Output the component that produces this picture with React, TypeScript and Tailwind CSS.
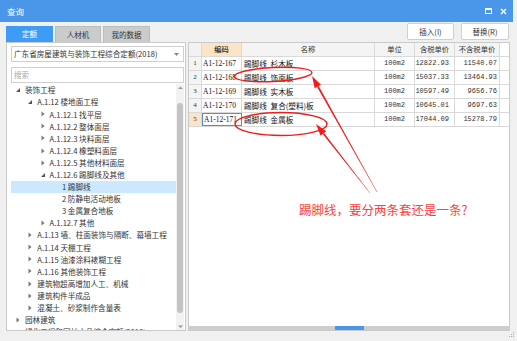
import React from "react";

type Node = { lv: number; t: string; a?: "open" | "closed"; sel?: boolean };

const TREE: Node[] = [
  { lv: 0, t: "装饰工程", a: "open" },
  { lv: 1, t: "A.1.12 楼地面工程", a: "open" },
  { lv: 2, t: "A.1.12.1 找平层", a: "closed" },
  { lv: 2, t: "A.1.12.2 整体面层", a: "closed" },
  { lv: 2, t: "A.1.12.3 块料面层", a: "closed" },
  { lv: 2, t: "A.1.12.4 橡塑料面层", a: "closed" },
  { lv: 2, t: "A.1.12.5 其他材料面层", a: "closed" },
  { lv: 2, t: "A.1.12.6 踢脚线及其他", a: "open" },
  { lv: 3, t: "1 踢脚线", sel: true },
  { lv: 3, t: "2 防静电活动地板" },
  { lv: 3, t: "3 金属复合地板" },
  { lv: 2, t: "A.1.12.7 其他", a: "closed" },
  { lv: 1, t: "A.1.13 墙、柱面装饰与隔断、幕墙工程", a: "closed" },
  { lv: 1, t: "A.1.14 天棚工程", a: "closed" },
  { lv: 1, t: "A.1.15 油漆涂料裱糊工程", a: "closed" },
  { lv: 1, t: "A.1.16 其他装饰工程", a: "closed" },
  { lv: 1, t: "建筑物超高增加人工、机械", a: "closed" },
  { lv: 1, t: "建筑构件半成品", a: "closed" },
  { lv: 1, t: "混凝土、砂浆制作含量表", a: "closed" },
  { lv: 0, t: "园林建筑", a: "closed" },
  { lv: 0, t: "绿化工程和园林小品综合定额(2018)" },
];

const INDENT = ["pl-[4px]", "pl-[16.3px]", "pl-[28.6px]", "pl-[40.9px]"];

const ROWS = [
  ["1", "A1-12-167", "踢脚线\u2002杉木板", "100m2", "12822.93", "11540.07"],
  ["2", "A1-12-168", "踢脚线\u2002饰面板", "100m2", "15037.33", "13464.93"],
  ["3", "A1-12-169", "踢脚线\u2002实木板", "100m2", "10597.49", "9656.76"],
  ["4", "A1-12-170", "踢脚线\u2002复合(塑料)板", "100m2", "10645.01", "9697.63"],
  ["5", "A1-12-171", "踢脚线\u2002金属板", "100m2", "17044.09", "15278.79"],
];

// tapered arrow from tail to tip, computed points
function arrow(tx: number, ty: number, hx: number, hy: number) {
  const dx = hx - tx, dy = hy - ty;
  const len = Math.hypot(dx, dy);
  const ux = dx / len, uy = dy / len;
  const nx = -uy, ny = ux;
  const bx = hx - ux * 12, by = hy - uy * 12;
  const p = (x: number, y: number) => `${x.toFixed(1)},${y.toFixed(1)}`;
  const shaft = [
    p(tx + nx * 0.2, ty + ny * 0.2), p(bx + nx * 0.9, by + ny * 0.9),
    p(bx - nx * 0.9, by - ny * 0.9), p(tx - nx * 0.2, ty - ny * 0.2),
  ].join(" ");
  const head = [p(hx, hy), p(bx + nx * 3.6, by + ny * 3.6), p(bx - nx * 3.6, by - ny * 3.6)].join(" ");
  return { shaft, head };
}

function Arrow({ a }: { a: Node["a"] }) {
  if (a === "open")
    return (
      <svg width="10" height="8" viewBox="0 0 10 8"><polygon points="1,6 5,6 5,2" fill="#555" /></svg>
    );
  if (a === "closed")
    return (
      <svg width="10" height="8" viewBox="0 0 10 8"><polygon points="1.5,1.5 4.5,4 1.5,6.5" fill="#777" /></svg>
    );
  return <span className="w-[10px] shrink-0" />;
}

export default function App() {
  const a1 = arrow(377, 192, 312, 76);
  const a2 = arrow(370, 193, 316, 124);
  return (
    <div className="relative w-[517px] h-[341px] overflow-hidden bg-[#f0f0f0] font-['Noto_Sans_CJK_SC',sans-serif] text-[#333]">
      {/* title bar */}
      <div className="w-[513px] h-[22px] bg-[#4a96e9] flex items-center pl-[7px] pr-[6px]">
        <span className="text-white text-[8.5px]">查询</span>
        <div className="ml-auto flex items-center gap-[8px]">
          <svg width="7" height="6" viewBox="0 0 7 6"><rect x="0.5" y="0.5" width="6" height="5" fill="none" stroke="#fff" /><rect x="0" y="0" width="7" height="2" fill="#fff" /></svg>
          <svg width="7" height="7" viewBox="0 0 7 7"><path d="M1 1 L6 6 M6 1 L1 6" stroke="#fff" strokeWidth="1.4" /></svg>
        </div>
      </div>

      {/* tabs + buttons */}
      <div className="flex h-[20px] pl-[6px] pr-[8px]">
        <div className="flex items-end gap-[2px]">
          <div className="w-[47px] h-[16px] bg-[#3d9df6] text-white text-[7.5px] flex items-center justify-center">定额</div>
          <div className="w-[46px] h-[16px] bg-[#cbcbcb] border border-b-0 border-[#bdbdbd] text-[7.5px] flex items-center justify-center">人材机</div>
          <div className="w-[47px] h-[16px] bg-[#cbcbcb] border border-b-0 border-[#bdbdbd] text-[7.5px] flex items-center justify-center">我的数据</div>
        </div>
        <div className="ml-auto flex gap-[7px] pt-[1px]">
          <button className="w-[47px] h-[17px] bg-white border border-[#cfcfcf] rounded-[2px] text-[7.5px]">插入(I)</button>
          <button className="w-[48px] h-[17px] bg-white border border-[#cfcfcf] rounded-[2px] text-[7.5px]">替换(R)</button>
        </div>
      </div>

      {/* panels */}
      <div className="flex gap-[2px] pl-[6px] pr-[7px] h-[289px]">
        {/* left */}
        <div className="w-[180px] bg-white border border-[#cacaca] flex flex-col">
          <div className="pl-[4px] pr-[1px] pt-[3px]">
            <div className="h-[16px] border border-[#cfcfcf] flex items-center pl-[2px] pr-[4px] text-[7.6px] whitespace-nowrap">
              广东省房屋建筑与装饰工程综合定额(2018)
              <svg className="ml-auto" width="5" height="3" viewBox="0 0 5 3"><polygon points="0,0 5,0 2.5,3" fill="#888" /></svg>
            </div>
            <div className="mt-[5px] h-[16px] border border-[#cfcfcf] flex items-center pl-[2px] text-[7.5px] text-[#aaa]">搜索</div>
          </div>
          <div className="flex flex-1 min-h-0 mt-[1px] pr-[1px]">
            <div className="flex-1 overflow-hidden pl-[4px]">
              {TREE.map((n, i) => (
                <div key={i} className={`h-[12.1px] flex items-center whitespace-nowrap text-[7.6px] ${INDENT[n.lv]} ${n.sel ? "bg-[#cce8ff]" : ""}`}>
                  {n.lv < 3 ? <Arrow a={n.a} /> : <span className="w-[10px] shrink-0" />}
                  <span>{n.t}</span>
                </div>
              ))}
            </div>
            <div className="w-[8px] bg-[#f2f2f2] flex flex-col items-center">
              <svg className="mt-[2px]" width="5" height="4" viewBox="0 0 5 4"><polygon points="0,3 5,3 2.5,0.5" fill="#999" /></svg>
              <div className="mt-[13px] w-[6px] h-[210px] rounded-[3px] bg-[#c3c3c3]" />
              <svg className="mt-auto mb-[1px]" width="5" height="4" viewBox="0 0 5 4"><polygon points="0,0.5 5,0.5 2.5,3" fill="#999" /></svg>
            </div>
          </div>
        </div>

        {/* right */}
        <div className="flex-1 bg-white border border-[#cacaca] flex flex-col">
          <div className="flex h-[14px] border-b border-[#d9d9d9] text-[7.3px]">
            <div className="w-[13px] bg-[#f2f2f2] border-r border-[#d9d9d9]" />
            <div className="w-[40px] bg-[#fde4c6] border-r border-[#d9d9d9] flex items-center justify-center text-[#222] font-medium">编码</div>
            <div className="w-[133px] bg-[#f4f4f4] border-r border-[#d9d9d9] flex items-center justify-center">名称</div>
            <div className="w-[40px] bg-[#f4f4f4] border-r border-[#d9d9d9] flex items-center justify-center">单位</div>
            <div className="w-[40px] bg-[#f4f4f4] border-r border-[#d9d9d9] flex items-center justify-center">含税单价</div>
            <div className="w-[45px] bg-[#f4f4f4] border-r border-[#d9d9d9] flex items-center justify-center">不含税单价</div>
          </div>
          {ROWS.map((r) => {
            const last = r[0] === "5";
            return (
              <div key={r[0]} className="flex h-[14px] border-b border-[#d9d9d9]">
                <div className={`w-[13px] border-r border-[#d9d9d9] flex items-center justify-center text-[7px] font-['Liberation_Serif',serif] ${last ? "bg-[#fde4c6]" : "bg-[#f4f4f4]"}`}>{r[0]}</div>
                <div className={`w-[40px] border-r flex items-center pl-[1px] text-[7.5px] font-['Liberation_Serif',serif] text-[#111] ${last ? "border border-[#4a8fe0]" : "border-[#d9d9d9]"}`}>{r[1]}</div>
                <div className="w-[133px] border-r border-[#d9d9d9] flex items-center pl-[2px] text-[7.6px] text-[#111] whitespace-nowrap">{r[2]}</div>
                <div className="w-[40px] border-r border-[#d9d9d9] flex items-center justify-center text-[7px] font-['Liberation_Mono',monospace]">{r[3]}</div>
                <div className="w-[40px] border-r border-[#d9d9d9] flex items-center justify-end pr-[5px] text-[7px] font-['Liberation_Mono',monospace]">{r[4]}</div>
                <div className="w-[45px] border-r border-[#d9d9d9] flex items-center justify-end pr-[2px] text-[7px] font-['Liberation_Mono',monospace]">{r[5]}</div>
              </div>
            );
          })}
          <div className="mt-auto h-[4px] bg-[#cdcdcd] flex justify-center">
            <div className="w-[29px] h-full bg-[#4a96e9]" />
          </div>
        </div>
      </div>

      {/* resize grip */}
      <svg className="absolute right-[2px] bottom-[3px]" width="6" height="6" viewBox="0 0 6 6">
        <rect x="4" y="0" width="1" height="1" fill="#aaa" />
        <rect x="2" y="2" width="1" height="1" fill="#aaa" /><rect x="4" y="2" width="1" height="1" fill="#aaa" />
        <rect x="0" y="4" width="1" height="1" fill="#aaa" /><rect x="2" y="4" width="1" height="1" fill="#aaa" /><rect x="4" y="4" width="1" height="1" fill="#aaa" />
      </svg>

      {/* annotation overlay */}
      <svg className="absolute inset-0 pointer-events-none" width="517" height="341" viewBox="0 0 517 341">
        <ellipse cx="273" cy="74.5" rx="39" ry="7" fill="none" stroke="#f01c1c" strokeWidth="1.4" transform="rotate(-3 273 74.5)" />
        <ellipse cx="281" cy="124" rx="46" ry="11.5" fill="none" stroke="#f01c1c" strokeWidth="1.4" />
        <polygon points={a1.shaft} fill="#f01c1c" />
        <polygon points={a1.head} fill="#f01c1c" />
        <polygon points={a2.shaft} fill="#f01c1c" />
        <polygon points={a2.head} fill="#f01c1c" />
      </svg>
      <div className="absolute left-[299px] top-[201px] text-[12.5px] leading-[18px] text-[#ff4040] whitespace-nowrap">
        踢脚线，要分两条套还是一条?
      </div>
    </div>
  );
}
